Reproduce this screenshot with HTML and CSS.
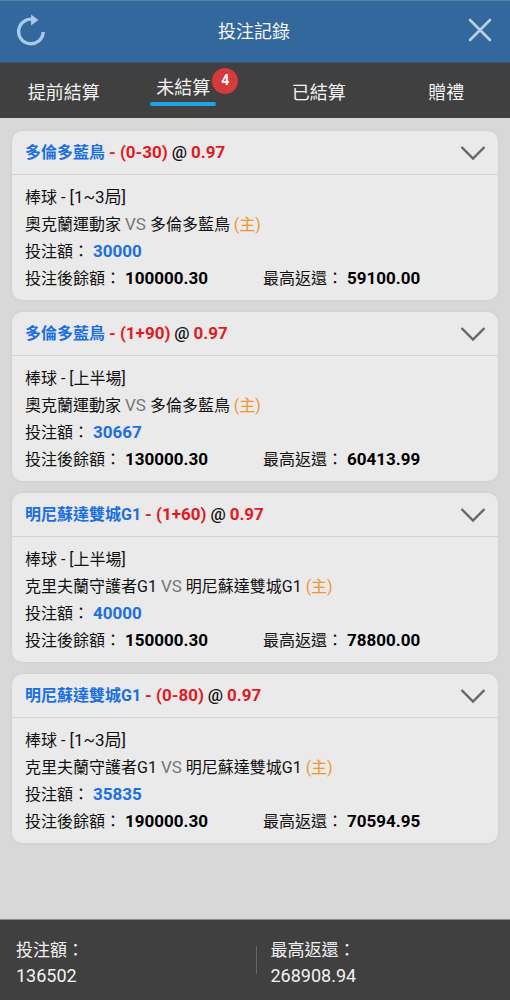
FILE: index.html
```html
<!DOCTYPE html>

<html lang="zh-Hant">
    <head>
        <meta charset="utf-8">
        <meta name="viewport" content="width=device-width, initial-scale=1">
        <title>投注記錄</title>
        <link rel="stylesheet" href="styles.css">
    </head>

    <body>

        <header class="topbar">
            <button class="icon-btn" type="button" aria-label="重新整理">
                <svg width="30" height="34" viewBox="0 0 30 34" fill="none">
                    <path d="M19 6.9A12.3 12.3 0 1 0 27.2 19" stroke="#a9c9ea" stroke-width="3.4"/>
                    <path d="M15 1.5L22.5 7L15 12.5Z" fill="#a9c9ea"/>
                </svg>
            </button>
            <h1 class="title">投注記錄</h1>
            <button class="icon-btn" type="button" aria-label="關閉">
                <svg width="24" height="24" viewBox="0 0 24 24" fill="none">
                    <path d="M2 2L22 22M22 2L2 22" stroke="#b9d0e8" stroke-width="2.6" stroke-linecap="round"/>
                </svg>
            </button>
        </header>

        <nav class="tabs">
            <a class="tab" href="#early">提前結算</a>
            <a class="tab active" href="#open"><span class="tab-text">未結算<span class="badge">4</span></span></a>
            <a class="tab" href="#settled">已結算</a>
            <a class="tab" href="#gift">贈禮</a>
        </nav>

        <main class="list">

            <section class="card">
                <div class="card-head">
                    <h2 class="pick"><span class="team">多倫多藍鳥</span> <span class="odds">- (0-30)</span> <span class="at">@</span> <span class="odds">0.97</span></h2>
                    <button class="toggle" type="button" aria-label="展開">
                        <svg width="26" height="16" viewBox="0 0 26 16" fill="none"><path d="M1.5 2L13 13.5L24.5 2" stroke="#666" stroke-width="2.4"/></svg>
                    </button>
                </div>
                <div class="card-body">
                    <p>棒球 - <span class="period">[1~3局]</span></p>
                    <p>奧克蘭運動家 <span class="vs">VS</span> 多倫多藍鳥 <span class="home">(主)</span></p>
                    <p>投注額： <b class="stake">30000</b></p>
                    <div class="sums">
                        <p>投注後餘額： <b>100000.30</b></p>
                        <p>最高返還： <b>59100.00</b></p>
                    </div>
                </div>
            </section>

            <section class="card">
                <div class="card-head">
                    <h2 class="pick"><span class="team">多倫多藍鳥</span> <span class="odds">- (1+90)</span> <span class="at">@</span> <span class="odds">0.97</span></h2>
                    <button class="toggle" type="button" aria-label="展開">
                        <svg width="26" height="16" viewBox="0 0 26 16" fill="none"><path d="M1.5 2L13 13.5L24.5 2" stroke="#666" stroke-width="2.4"/></svg>
                    </button>
                </div>
                <div class="card-body">
                    <p>棒球 - [上半場]</p>
                    <p>奧克蘭運動家 <span class="vs">VS</span> 多倫多藍鳥 <span class="home">(主)</span></p>
                    <p>投注額： <b class="stake">30667</b></p>
                    <div class="sums">
                        <p>投注後餘額： <b>130000.30</b></p>
                        <p>最高返還： <b>60413.99</b></p>
                    </div>
                </div>
            </section>

            <section class="card">
                <div class="card-head">
                    <h2 class="pick"><span class="team">明尼蘇達雙城G1</span> <span class="odds">- (1+60)</span> <span class="at">@</span> <span class="odds">0.97</span></h2>
                    <button class="toggle" type="button" aria-label="展開">
                        <svg width="26" height="16" viewBox="0 0 26 16" fill="none"><path d="M1.5 2L13 13.5L24.5 2" stroke="#666" stroke-width="2.4"/></svg>
                    </button>
                </div>
                <div class="card-body">
                    <p>棒球 - [上半場]</p>
                    <p>克里夫蘭守護者G1 <span class="vs">VS</span> 明尼蘇達雙城G1 <span class="home">(主)</span></p>
                    <p>投注額： <b class="stake">40000</b></p>
                    <div class="sums">
                        <p>投注後餘額： <b>150000.30</b></p>
                        <p>最高返還： <b>78800.00</b></p>
                    </div>
                </div>
            </section>

            <section class="card">
                <div class="card-head">
                    <h2 class="pick"><span class="team">明尼蘇達雙城G1</span> <span class="odds">- (0-80)</span> <span class="at">@</span> <span class="odds">0.97</span></h2>
                    <button class="toggle" type="button" aria-label="展開">
                        <svg width="26" height="16" viewBox="0 0 26 16" fill="none"><path d="M1.5 2L13 13.5L24.5 2" stroke="#666" stroke-width="2.4"/></svg>
                    </button>
                </div>
                <div class="card-body">
                    <p>棒球 - <span class="period">[1~3局]</span></p>
                    <p>克里夫蘭守護者G1 <span class="vs">VS</span> 明尼蘇達雙城G1 <span class="home">(主)</span></p>
                    <p>投注額： <b class="stake">35835</b></p>
                    <div class="sums">
                        <p>投注後餘額： <b>190000.30</b></p>
                        <p>最高返還： <b>70594.95</b></p>
                    </div>
                </div>
            </section>

        </main>

        <footer class="totals">
            <div class="total">
                <p class="total-label">投注額：</p>
                <p class="total-value">136502</p>
            </div>
            <div class="divider"></div>
            <div class="total">
                <p class="total-label">最高返還：</p>
                <p class="total-value">268908.94</p>
            </div>
        </footer>

    </body>
</html>
```

FILE: styles.css
```css
* { box-sizing: border-box; }
body
{
    margin: 0; min-height: 100vh;
    display: flex; flex-direction: column;
    background: #d8d8d8; color: #111;
    font-family: Roboto, "Noto Sans CJK TC", sans-serif; font-size: 16px;
}
h1, h2, p { margin: 0; }
button { padding: 0; border: 0; background: none; cursor: pointer; }
svg { display: block; }

/* header */
.topbar
{
    display: flex; align-items: center; justify-content: space-between;
    height: 63px; padding: 0 18px 3px 16px;
    background: #32689b; border-top: 1px solid #5a7f9f; border-bottom: 1px solid #3d5873;
}
.icon-btn { width: 30px; height: 34px; display: flex; align-items: center; justify-content: center; }
.icon-btn:last-child { justify-content: flex-end; }
.title { color: #f4f7fa; font-size: 18px; font-weight: 400; }

/* tabs */
.tabs { display: grid; grid-template-columns: repeat(4, 1fr); height: 55px; background: #404040; }
.tab
{
    display: flex; align-items: center; justify-content: center;
    color: #f2f2f2; font-size: 18px; text-decoration: none;
}
.tab.active { align-items: flex-start; padding: 8px 16px 0 0; }
.active .tab-text { position: relative; height: 35px; padding: 0 6px; line-height: 34px; }
.tab-text::after
{
    content: ""; position: absolute; left: 0; right: 0; bottom: 0;
    height: 4px; border-radius: 2px; background: #1ea5e6;
}
.badge
{
    position: absolute; top: -3px; right: -22px;
    width: 26px; height: 26px; border-radius: 50%;
    background: #d63a3a; color: #fff;
    font-size: 14px; font-weight: 700; line-height: 25px; text-align: center;
}

/* bet cards */
.list { flex: 1; display: flex; flex-direction: column; gap: 12px; padding: 13px 12px; }
.card { background: #eaeaea; border-radius: 10px; box-shadow: 0 0 3px #c8c8c8; }
.card-head
{
    display: flex; align-items: center; justify-content: space-between;
    height: 44px; padding: 0 12px 0 13px; border-bottom: 1px solid #d3d3d3;
}
.pick { padding-bottom: 4px; font-size: 16px; font-weight: 700; }
.odds, .at, .vs, .period, .card-body b { font-size: 17px; }
.team, .card-body .stake { color: #1a6fe4; }
.odds { color: #e3191e; }
.at { font-weight: 500; }
.card-body { padding: 9px 13px 8px; line-height: 27px; }
.card-body b { color: #000; }
.vs { color: #777; }
.home { color: #ee9630; }
.sums { display: grid; grid-template-columns: 238px 1fr; }

/* footer */
.totals
{
    display: flex; align-items: center; height: 81px; padding-left: 16px;
    background: #404040; color: #f2f2f2; border-top: 1px solid #8c8c8c;
}
.total { flex: 1; padding-top: 5px; line-height: 26px; }
.divider { width: 1px; height: 28px; margin-right: 14px; background: #666; }
.total-label { font-size: 17px; }
.total-value { font-size: 18px; }
```
